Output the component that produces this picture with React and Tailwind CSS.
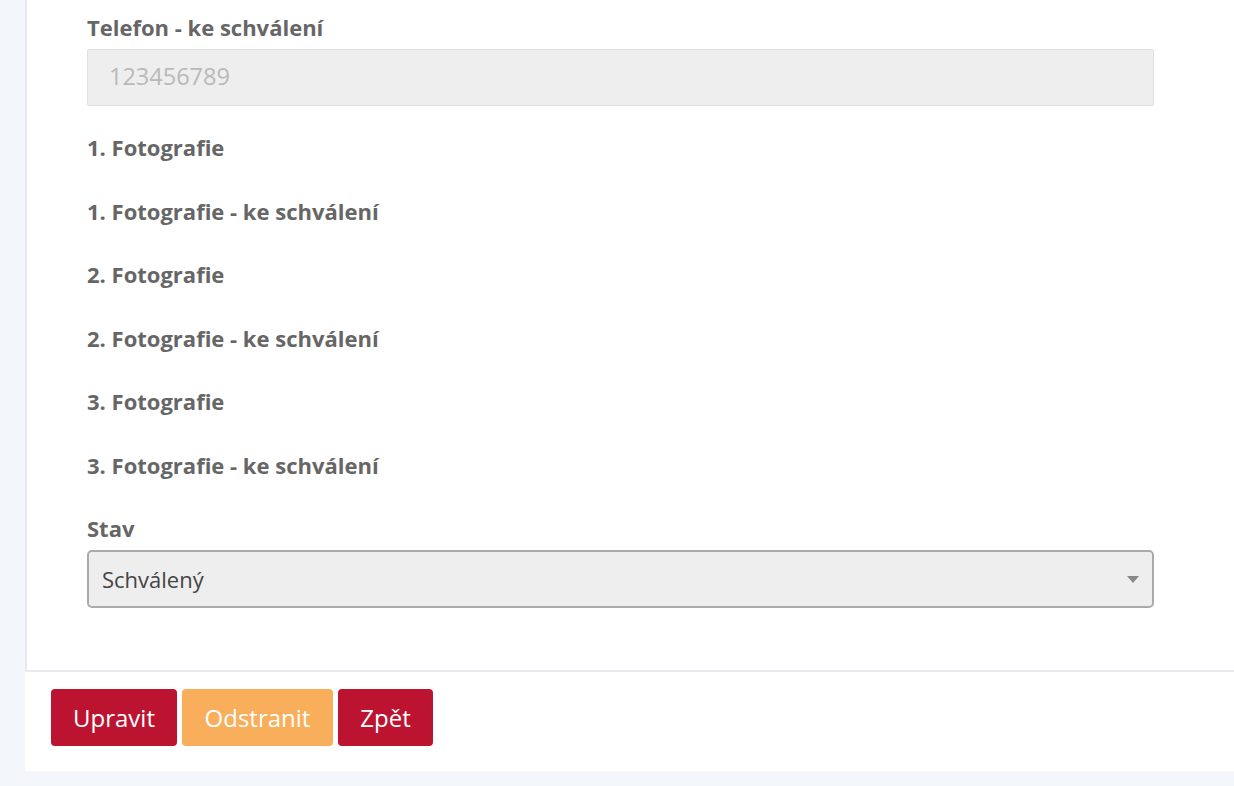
import React from 'react';

const fields = [
  '1. Fotografie',
  '1. Fotografie - ke schválení',
  '2. Fotografie',
  '2. Fotografie - ke schválení',
  '3. Fotografie',
  '3. Fotografie - ke schválení',
];

const Label = ({ children }) => (
  <label className="block text-[22px] font-bold leading-[27px] text-[#666666] mb-2">{children}</label>
);

export default function App() {
  return (
    <div className="min-h-[786px] bg-[#f3f6fa] pl-[25px] font-['Open_Sans',sans-serif]">
      <div className="bg-white">
        {/* Form body */}
        <div className="border-l-2 border-b-2 border-[#e6e9ed] pt-[13.5px] pb-[62px] pl-[60px] pr-[80px]">
          <div className="flex flex-col mb-[28.5px]">
            <Label>Telefon - ke schválení</Label>
            <div className="h-[57px] flex items-center px-[21px] bg-[#eeeeee] border border-[#e0e0e0] rounded-[2px] text-[23.5px] text-[#b9b9b9]">
              123456789
            </div>
          </div>

          {fields.map((f) => (
            <div key={f} className="flex flex-col mb-[28.5px]">
              <Label>{f}</Label>
            </div>
          ))}

          <div className="flex flex-col">
            <Label>Stav</Label>
            <div className="h-[58px] flex items-center justify-between pl-[13px] pr-[13px] bg-[#eeeeee] border-2 border-[#aaaaaa] rounded-[5px] text-[22px] text-[#444444]">
              <span>Schválený</span>
              <svg width="12" height="7" viewBox="0 0 12 7">
                <polygon points="0,0 12,0 6,7" fill="#888888" />
              </svg>
            </div>
          </div>
        </div>

        {/* Footer */}
        <div className="pt-[17px] pb-[25px] pl-[26px] flex gap-[5px]">
          <button className="h-[57px] w-[126px] rounded-[4px] bg-[#bc1430] text-white text-[24px]">Upravit</button>
          <button className="h-[57px] w-[151px] rounded-[4px] bg-[#f8ae5a] text-white text-[24px]">Odstranit</button>
          <button className="h-[57px] w-[95px] rounded-[4px] bg-[#bc1430] text-white text-[24px]">Zpět</button>
        </div>
      </div>
    </div>
  );
}
